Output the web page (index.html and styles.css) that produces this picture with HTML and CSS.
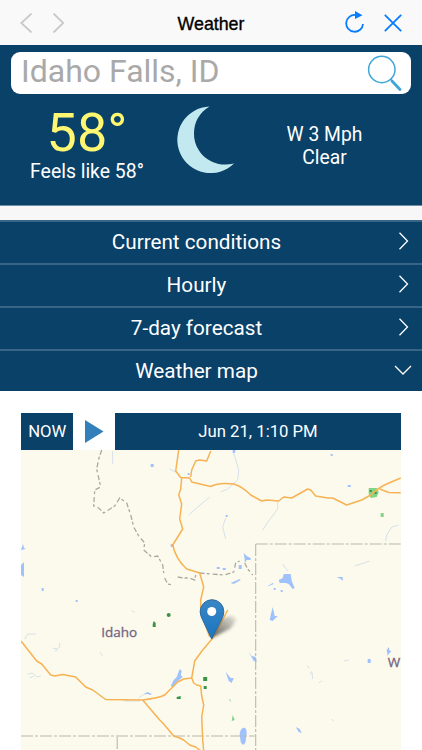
FILE: index.html
```html
<!DOCTYPE html>
<html>
<head>
  <meta charset="UTF-8">
  <title>Weather</title>
  <meta name="viewport" content="width=device-width, initial-scale=1">
  <link rel="stylesheet" href="styles.css">
</head>
<body>

<header class="topbar">
  <div class="topbar-side">
    <svg width="44" height="20" viewBox="0 0 44 20"><path d="M11.500 .5L1.300 10l10.200 9.500M33.500 .5L43.300 10l-9.800 9.500"/></svg>
  </div>
  <h1>Weather</h1>
  <div class="topbar-side actions">
    <svg width="19" height="23" viewBox="0 0 19 23"><path d="M10.500 4A8.400 8.400 0 1 0 18 13"/><path class="fill" d="M10 0L17.500 4.200 10 8z"/></svg>
    <svg width="18" height="18" viewBox="0 0 18 18"><path d="M.8 .8l16.400 16.400M17.200 .8L.8 17.200"/></svg>
  </div>
</header>

<section class="current">
  <div class="search">
    <span>Idaho Falls, ID</span>
    <svg width="36" height="36" viewBox="0 0 36 36"><circle cx="15.800" cy="14.500" r="13.200"/><path d="M24.500 24l2 2"/><path class="handle" d="M26 26l8 8.500"/></svg>
  </div>
  <div class="summary">
    <div class="temp">
      <div class="degrees">58°</div>
      <div class="feels">Feels like 58°</div>
    </div>
    <svg class="moon" width="58" height="68" viewBox="0 0 58 68"><path d="M32.500 .5A33.300 33.300 0 1 0 57 57.500C34 63 17 46 17 28C17 16 22 7 32.500 .5z"/></svg>
    <div class="wind">W 3 Mph<br>Clear</div>
  </div>
</section>

<nav class="menu">
  <a class="row">Current conditions<svg viewBox="0 0 18 18"><path d="M5.500 .8L13.500 9l-8 8.200"/></svg></a>
  <a class="row">Hourly<svg viewBox="0 0 18 18"><path d="M5.500 .8L13.500 9l-8 8.200"/></svg></a>
  <a class="row">7-day forecast<svg viewBox="0 0 18 18"><path d="M5.500 .8L13.500 9l-8 8.200"/></svg></a>
  <a class="row">Weather map<svg viewBox="0 0 18 18"><path d="M1 5l8 8 8-8"/></svg></a>
</nav>

<main class="map-section">
  <div class="timeline">
    <div class="now">NOW</div>
    <svg class="play" width="19" height="23" viewBox="0 0 19 23"><path d="M0 0L18.500 11.500 0 23z"/></svg>
    <div class="date">Jun 21, 1:10 PM</div>
  </div>

  <svg class="map" width="379.500" height="301" viewBox="21.300 450 379.500 301">
    <defs>
      <linearGradient id="pin" x1="0" y1="0" x2="0" y2="1">
        <stop offset="0" stop-color="#3a86c4"/>
        <stop offset="1" stop-color="#1a75c2"/>
      </linearGradient>
      <linearGradient id="shadow" x1="0" y1="1" x2="1" y2="0">
        <stop offset="0" stop-color="#333" stop-opacity="0.8"/>
        <stop offset="1" stop-color="#333" stop-opacity="0.1"/>
      </linearGradient>
      <filter id="soft" x="-50%" y="-50%" width="200%" height="200%"><feGaussianBlur stdDeviation="1.500"/></filter>
    </defs>

    <!-- rivers -->
    <g class="river">
      <path d="M113 451v13M210 497l-12 10-9 8M170 469l6 3M234 453l5 17-1 10-10 9-7 3M278 502v7l-9 12-6 9M226 518l-3 9 3 12M399 525l-7 2-5 8-1 6M283 564l5 7M355 566l15-5"/>
      <path d="M25 639l3-5 8 0M28 674l5-1 4 4 4-1M30 678l4-2M53 648l4 1 3-2 0-4M55 651l3-1M100 652l3 4M132 611l3 1M139 698l4-3 5-2M124 701h16"/>
      <path d="M307 666l3 2M312 671l1 8M310 672l3 3M319 683l3-2M344 661l5-1M332 719l2 2"/>
    </g>

    <!-- lakes -->
    <g class="lake">
      <path d="M21.300 550l2-6 1 4 2 1zM21.300 565l3-3v13h-3zM21.300 575h3v2zM42 588h2v3h-2zM76 600h2v2h-2zM151 464h3v3h-3zM233 450h3l-1 3h-2zM226 515h2v2h-2zM188 473h2v2h-2zM171 544h3v3h-3zM217 567h3v2h-3zM223 568h3v2h-3zM239 565h3v4h-3zM331 454h2v2h-2zM348 485h3v2h-3z"/>
      <path d="M244 553l3 3 4 2v2h-4l-2 3v-4zM231 583l9-4 1 1-7 4zM284 574h7l1 7 3 7-2 1-4-5-3-1-6 0-1-3 4-2zM268 586l5-3 1 1-5 2zM274 588h2v2h-2zM281 590h2v2h-2zM337 577l6 0 0 4-2-2zM273 607l2 9 3 0-3 3-2 2-3-1 1-5zM249 652l3 4 4 1 1 5-3-1zM226 672l5 6 3 0-2 5-3-2zM180 669l2 2-1 4 2 2-6 5-4 5-2-1 3-6 3-3z"/>
      <path d="M243 728q4-1 4 5l-1 8q-2 7-5 1l-1-7q0-5 3-7zM387 650l2-3 1 4 2 0-3 3-1 2zM368 659h3v4h-3zM144 694l4-2 4 2-1 1-3-1zM296 727l4 2 2 4-3-1z"/>
    </g>

    <!-- parks -->
    <g class="park">
      <circle cx="169" cy="615" r="2"/>
      <path d="M154 621l2 2v4h-3v-3zM203.500 677h4v4h-4zM204 686h3v3h-3zM177 697l4-1v3h-4z"/>
    </g>
    <path class="park-light" d="M369 488h8l2 4-2 5-6 1-2-4zM381 513h3v4h-3zM233 715l2 5-3 1zM229 699l2 1v2z"/>
    <path class="park" d="M370 490h2v2h-2zM375 492h2v2h-2z"/>

    <!-- state borders -->
    <g class="border">
      <path d="M102 450L99 459 97 469 99 478 101 487 95 490 94 506 99 508 104 513 115 506 120 498 127 503 131 515 134 527 139 536 145 543 144 550 152 557 158 556 163 565 164 573"/>
      <path d="M165 578l3 6 6 1M178 577l6 1 6 0 5 2 1-5M200 573l11 1 14 1 9-3 2-9 4-2M245 563l3 6 5 6"/>
    </g>
    <path class="border line" d="M256 544v207M256 544h145M21.300 736H255M117.500 737v14"/>

    <!-- highways -->
    <g class="road">
      <path d="M179 450L176 471 181 477.500 190 478 192 482 211 486.500Q219 482 234 484Q242 486 251 495L262 501 267 500 279 501 284 497 292 498 308 489 311 490 316 496 328 498 333 498 347 505 362 500 371 495Q380 487 387 484L401 478"/>
      <path d="M380 489l9 3.500 12 .3M191 477L192 470 196 461 200 460 207 461 211 451"/>
      <path d="M182 478L181 489 179 495 182 504 180 519 183 529 173 545Q176 559 187 569L200 573 204 587 201 600V612L210 637"/>
      <path d="M21.300 641L37 661 42 664 51 675 55 676 63 674.500 76 677 86 687 93 690 106 699.500 143 700Q159 698 165 695L178 682 184 679 192 678 195 661 203 650 214 637 228 610"/>
      <path d="M192 678L194 683 197 685 201 686 202 696 204 705 202 717 203 740 204 751M143 700L160 720 164 724 174 736 180 738 184 740 190 745 196 747 201 751"/>
    </g>

    <text x="101.500" y="637">Idaho</text>
    <text x="388" y="667">W</text>

    <path class="pin-shadow" filter="url(#soft)" d="M212 638l9-17q8-7 13-4t-4 12z"/>
    <path class="pin" d="M212 639l-9.500-20q-2-3.500-2-7.500a11.800 11.800 0 0 1 23.600 0q0 4-2 7.500z"/>
    <circle cx="212" cy="611.500" r="4.500" fill="#fff"/>
  </svg>
</main>

</body>
</html>
```

FILE: styles.css
```css
body {
  font-family: Roboto, sans-serif;
  margin: 0;
  height: 750px;
  overflow: hidden;
  background: white;
  color: white;
}
svg {
  display: block;
  fill: none;
}

/* browser bar */
.topbar {
  display: flex;
  align-items: center;
  justify-content: space-between;
  height: 45px;
  padding: 0 20px;
  background: #f9f9f9;
  color: black;
}
.topbar h1 {
  margin: 4px 0 0;
  font-family: "Liberation Sans", Arial, sans-serif;
  font-size: 17.800px;
  font-weight: 500;
  -webkit-text-stroke: 0.35px black;
}
.topbar-side {
  width: 82px;
  stroke: #c9c9c9;
  stroke-width: 1.8;
}
.actions {
  display: flex;
  align-items: center;
  justify-content: flex-end;
  gap: 20px;
  stroke: #087cff;
}
.fill {
  fill: #087cff;
  stroke: none;
}

/* current weather */
.current {
  height: 161px;
  box-sizing: border-box;
  padding: 7px 11px 0;
  background: #094169;
  border-bottom: 1px solid #6f8fab;
}
.search {
  display: flex;
  align-items: center;
  justify-content: space-between;
  box-sizing: border-box;
  height: 41.500px;
  padding: 0 9px 0 10px;
  border-radius: 9px;
  background: white;
  color: #a9a9a9;
  font-size: 32px;
  line-height: 38px;
}
.search span {
  padding-bottom: 4px;
}
.search svg {
  stroke: #3fa5d8;
  stroke-width: 1.500;
}
.search .handle {
  stroke-width: 2.800;
  stroke-linecap: round;
}
.summary {
  display: grid;
  grid-template-columns: 152px 90px 1fr;
  align-items: start;
}
.temp {
  text-align: center;
  padding-top: 11px;
}
.degrees {
  color: #fff771;
  font-size: 54px;
  line-height: 55px;
}
.feels {
  font-size: 19.400px;
  line-height: 24px;
}
.moon {
  margin: 12.500px 0 0 14px;
  fill: #c2e9ef;
}
.wind {
  padding: 29px 15px 0 0;
  text-align: center;
  font-size: 19.300px;
  line-height: 23px;
}

/* accordion menu */
.menu {
  padding-top: 14.300px;
  background: #f7f7f7;
}
.row {
  position: relative;
  display: block;
  box-sizing: border-box;
  height: 42.800px;
  padding-right: 29px;
  border-top: 2px solid #386486;
  background: #094169;
  text-align: center;
  font-size: 20.700px;
  line-height: 41px;
}
.row svg {
  position: absolute;
  right: 10px;
  top: 10px;
  width: 18px;
  height: 18px;
  stroke: white;
  stroke-width: 1.300;
}

/* weather map */
.map-section {
  padding: 22px 21.300px 0;
}
.timeline {
  display: flex;
  align-items: center;
  height: 36.500px;
  font-size: 16.700px;
  line-height: 37px;
  text-align: center;
}
.now {
  width: 52px;
  background: #094169;
}
.play {
  margin: 0 11px 0 12px;
  fill: #337fb9;
}
.date {
  flex: 1;
  background: #094169;
}
.map {
  background: #fcfaec;
}
.map text {
  font: 13.500px "Open Sans", sans-serif;
  fill: #746582;
  stroke: #746582;
  stroke-width: 0.3;
}
.road {
  stroke: #f7b253;
  stroke-width: 1.500;
  stroke-linejoin: round;
}
.river {
  stroke: #ccd9ea;
  stroke-width: 0.8;
}
.lake {
  fill: #9fc2fc;
}
.park {
  fill: #399447;
}
.park-light {
  fill: #82d486;
}
.border {
  stroke: #aaa99f;
  stroke-width: 1.300;
  stroke-dasharray: 5 2 3 3;
}
.line {
  stroke: #b9b8ab;
  stroke-width: 1.100;
  stroke-dasharray: 12 2 3 2;
}
.pin {
  fill: url(#pin);
  stroke: #2b6ba1;
  stroke-width: 1;
}
.pin-shadow {
  fill: url(#shadow);
}
```
